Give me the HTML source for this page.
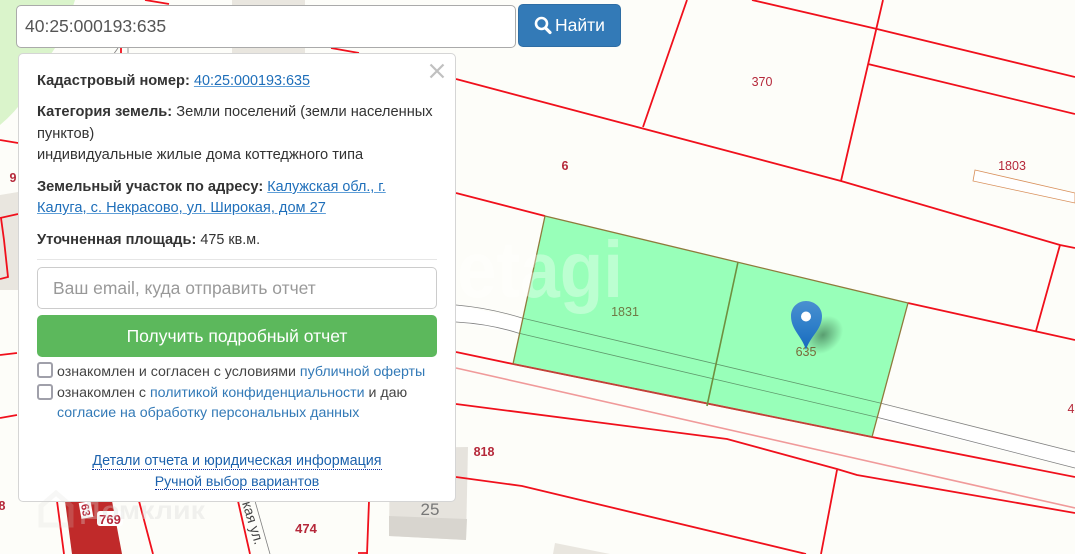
<!DOCTYPE html>
<html lang="ru"><head><meta charset="utf-8"><title>Отчет</title>
<style>
html,body{margin:0;padding:0}
body{width:1075px;height:554px;overflow:hidden;position:relative;background:#fdfdf9;font-family:"Liberation Sans",sans-serif;color:#333}
.a{position:absolute;white-space:nowrap;line-height:20px}
svg{position:absolute;left:0;top:0}
.p{font-size:14.65px}
.c{font-size:14.2px}
b{font-weight:700}
.l{color:#1f6fba;text-decoration:underline;text-decoration-color:#5f9fd8}
.b{color:#337ab7}
.d{color:#1c62ad;border-bottom:1px dotted #0a2fa0;line-height:16px}
.cb{position:absolute;left:37px;width:12px;height:12px;border:2px solid #a0a0aa;border-radius:3px;background:#fff}
</style></head><body>
<svg width="1075" height="554" viewBox="0 0 1075 554">
<defs>
<radialGradient id="sh" cx="50%" cy="50%" r="50%"><stop offset="0" stop-color="#2f5c3f" stop-opacity=".6"/><stop offset=".5" stop-color="#2f5c3f" stop-opacity=".3"/><stop offset="1" stop-color="#2f5c3f" stop-opacity="0"/></radialGradient>
<linearGradient id="pin" x1="0" y1="0" x2="0" y2="1"><stop offset="0" stop-color="#4a90d0"/><stop offset=".5" stop-color="#2f7fc9"/><stop offset="1" stop-color="#1669bd"/></linearGradient>
</defs>
<path d="M0 0H75Q60 48 45 60Q30 100 0 125Z" fill="#daf4cb"/>
<path d="M232 0H305V55H232Z" fill="#e9e6df"/>
<path d="M0 195L18 192V290H0Z" fill="#e9e6df"/>
<path d="M390 448L468 447L466 540L389 536Z" fill="#e6e3dd"/>
<path d="M389 516L467 519L466 540L389 536Z" fill="#d8d5cf"/>
<path d="M555 543L610 554H553Z" fill="#e9e6df"/>
<path d="M975 170L1075 193V203L973 181Z" fill="#fff" stroke="#d88f5a" stroke-width=".8"/>
<path d="M456 305L520 318L1075 452V468L518 333L456 322Z" fill="#fff"/>
<path d="M65 501H112L122 554H72Z" fill="#c02a2a"/>
<path d="M545 216L908 303L872 437L513 364Z" fill="#98ffb9"/>
<g fill="none" stroke="#7f7f7f" stroke-width=".8">
<path d="M456 305Q490 308 522 318M880 403L1075 452M456 322Q490 324 518 333M876 417L1075 468M255 501L270 554M118 48L113 55M128 48V55"/>
</g>
<path d="M522 318L880 403M518 333L876 417" fill="none" stroke="#5f9a6c" stroke-width=".8"/>
<path d="M456 368L1075 508" fill="none" stroke="#f09a9a" stroke-width="1.6"/>
<g fill="none" stroke="#f0101c" stroke-width="1.8">
<path d="M456 193L545 216M908 303L1075 340M456 352L513 364L872 437L1075 477"/>
<path d="M456 404L727 439L837 469L857 475L1075 513M456 477L522 486L806 554M837 470L821 554"/>
<path d="M1060 245L1036 331M456 79L841 181L1060 245L1075 248M687 0L643 127"/>
<path d="M752 0L877 29L1075 77M883 0L841 181M868 64L1075 114"/>
<path d="M145 0L169 4M331 48L359 53M121 48V55"/>
<path d="M0 140L18 143M0 355L17 353M0 418L17 415M0 218L18 214M1 218L4 240L8 277L0 279"/>
<path d="M57 501L64 554M139 501L153 554M238 501L250 554M369 501L367 554M358 553H367"/>
</g>
<path d="M545 216L908 303L872 437L513 364Z" fill="none" stroke="#8f7a3c" stroke-width="1.3"/>
<path d="M513 364L872 437" fill="none" stroke="#c0403a" stroke-width="1.3"/>
<path d="M738 262L707 406" fill="none" stroke="#6f8f3f" stroke-width="1.6"/>
<g font-family="Liberation Sans, sans-serif" font-size="12.5" text-anchor="middle">
<g fill="#b5283a">
<text x="762" y="86">370</text><text x="1012" y="170">1803</text><text x="565" y="170" font-weight="700">6</text>
<text x="306" y="533" font-weight="700" font-size="13">474</text><text x="484" y="456" font-weight="700">818</text>
<text x="13" y="182" font-weight="700">9</text><text x="2" y="510" font-weight="700">8</text><text x="1071" y="413">4</text>
</g>
<g fill="#6f7a45"><text x="625" y="316">1831</text></g>
</g>
<text x="457" y="297" font-family="Liberation Sans, sans-serif" font-size="80" font-weight="700" fill="#fff" fill-opacity=".35" textLength="166" lengthAdjust="spacingAndGlyphs">etagi</text>
<text x="430" y="515" font-family="Liberation Sans, sans-serif" font-size="17" fill="#777" text-anchor="middle">25</text>
<text x="806" y="356" font-family="Liberation Sans, sans-serif" font-size="12.5" fill="#7a6a3a" text-anchor="middle">635</text>
<ellipse cx="823" cy="335" rx="22" ry="17" fill="url(#sh)" transform="rotate(-40 823 335)"/>
<path d="M806 350C802 336 791 330 791 316C791 307 798 301 806 301C814 301 822 307 822 316C822 330 810 336 806 350Z" fill="url(#pin)"/>
<circle cx="806" cy="316.500" r="5" fill="#fff"/>
<g transform="translate(110 519)"><rect x="-13" y="-8" width="26" height="15" rx="3" fill="#fff"/><text y="5" text-anchor="middle" font-family="Liberation Sans, sans-serif" font-size="13" font-weight="700" fill="#b5283a">769</text></g>
<g transform="translate(86 510) rotate(80)"><rect x="-8" y="-6" width="16" height="12" fill="#fff"/><text y="4" text-anchor="middle" font-family="Liberation Sans, sans-serif" font-size="11" font-weight="700" fill="#b5283a">63</text></g>
<text transform="translate(242 503) rotate(73)" font-family="Liberation Sans, sans-serif" font-size="14" fill="#444">кая ул.</text>
</svg>

<div style="position:absolute;left:16px;top:5px;width:498px;height:41px;background:#fff;border:1px solid #aaa;border-radius:5px"></div>
<div class="a" style="left:25px;top:16px;font-size:17.5px;color:#555">40:25:000193:635</div>
<div style="position:absolute;left:518px;top:4px;width:101px;height:41px;background:#337ab7;border:1px solid #2e6da4;border-radius:5px"></div>
<svg style="left:534px;top:16px" width="18" height="19" viewBox="0 0 18 19"><circle cx="7.500" cy="7.500" r="5.500" fill="none" stroke="#fff" stroke-width="2.600"/><path d="M11.500 12L16 16.500" stroke="#fff" stroke-width="3.200" stroke-linecap="round"/></svg>
<div class="a" style="left:555px;top:15px;font-size:17.5px;color:#fff">Найти</div>

<div style="position:absolute;left:18px;top:53px;width:436px;height:447px;background:#fff;border:1px solid #d5d5d5;border-radius:5px"></div>
<svg style="left:429px;top:63px" width="16" height="16" viewBox="0 0 16 16"><path d="M1.500 1.500L14.500 14.500M14.500 1.500L1.500 14.500" stroke="#c0c0c0" stroke-width="2.200"/></svg>

<div class="a p" style="left:37px;top:71px"><b>Кадастровый номер:</b> <span class="l" style="font-size:14.4px">40:25:000193:635</span></div>
<div class="a p" style="left:37px;top:102px"><b>Категория земель:</b> Земли поселений (земли населенных</div>
<div class="a p" style="left:37px;top:124px">пунктов)</div>
<div class="a p" style="left:37px;top:145px">индивидуальные жилые дома коттеджного типа</div>
<div class="a p" style="left:37px;top:177px"><b>Земельный участок по адресу:</b> <span class="l" style="font-size:14.35px">Калужская обл., г.</span></div>
<div class="a p" style="left:37px;top:198px;font-size:14.6px"><span class="l">Калуга, с. Некрасово, ул. Широкая, дом 27</span></div>
<div class="a p" style="left:37px;top:230px"><b>Уточненная площадь:</b> <span style="font-size:14.35px">475 кв.м.</span></div>
<div style="position:absolute;left:37px;top:259px;width:400px;height:1px;background:#e6e6e6"></div>

<div style="position:absolute;left:37px;top:267px;width:398px;height:40px;background:#fff;border:1px solid #ccc;border-radius:5px"></div>
<div class="a" style="left:53px;top:278px;font-size:17.45px;color:#999">Ваш email, куда отправить отчет</div>
<div style="position:absolute;left:37px;top:315px;width:400px;height:42px;background:#5cb85c;border-radius:5px"></div>
<div class="a" style="left:37px;top:326px;width:400px;text-align:center;font-size:17.500px;color:#fff">Получить подробный отчет</div>

<div class="cb" style="top:362px"></div>
<div class="a c" style="left:57px;top:362px;color:#444">ознакомлен и согласен с условиями <span class="b">публичной оферты</span></div>
<div class="cb" style="top:384px"></div>
<div class="a c" style="left:57px;top:383px;color:#444">ознакомлен с <span class="b">политикой конфиденциальности</span> и даю</div>
<div class="a c" style="left:57px;top:403px"><span class="b">согласие на обработку персональных данных</span></div>

<div class="a" style="left:18px;width:438px;top:451px;text-align:center;font-size:14.35px"><span class="d">Детали отчета и юридическая информация</span></div>
<div class="a" style="left:18px;width:438px;top:471px;text-align:center;font-size:14.1px"><span class="d">Ручной выбор вариантов</span></div>

<svg width="1075" height="554" viewBox="0 0 1075 554">
<path d="M41 525V506L56 493L71 506V525Z" fill="none" stroke="#d8d8d4" stroke-opacity=".2" stroke-width="5"/>
<text x="81" y="519" font-family="Liberation Sans, sans-serif" font-size="25" font-weight="700" fill="#d8d8d4" fill-opacity=".33" textLength="124" lengthAdjust="spacingAndGlyphs">Домклик</text>
</svg>
</body></html>
